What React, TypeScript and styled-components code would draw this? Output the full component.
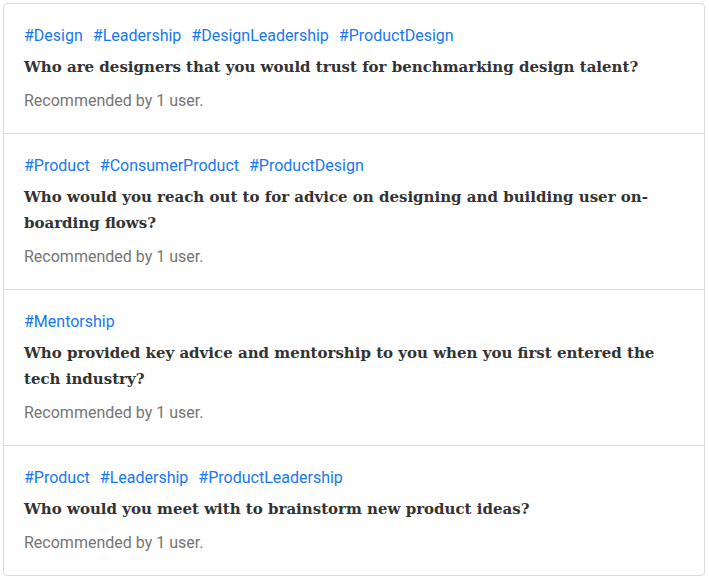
import React from 'react'
import styled, { createGlobalStyle } from 'styled-components'

const GlobalStyle = createGlobalStyle`
  body {
    margin: 0;
    background: #ffffff;
    font-family: Roboto, 'Liberation Sans', sans-serif;
  }
`

const Page = styled.div`
  padding: 3px 3px 3px 3px;
`

const Card = styled.div`
  border: 1px solid #dcdcdc;
  border-radius: 4px;
  background: #ffffff;
  width: 700px;
`

const Item = styled.div`
  padding: 22px 20px 22px 20px;
  & + & {
    border-top: 1px solid #dcdcdc;
  }
`

const Tags = styled.div`
  display: flex;
  gap: 10px;
  font-size: 16px;
  line-height: 20px;
`

const Tag = styled.a`
  color: #1877f2;
  text-decoration: none;
`

const Question = styled.div`
  margin-top: 8px;
  font-family: 'DejaVu Serif', serif;
  font-weight: bold;
  font-size: 15px;
  line-height: 26px;
  color: #333333;
`

const Meta = styled.div`
  margin-top: 11px;
  font-size: 16px;
  line-height: 20px;
  color: #757575;
`

interface Entry {
  tags: string[]
  question: string
  count: number
}

const entries: Entry[] = [
  {
    tags: ['Design', 'Leadership', 'DesignLeadership', 'ProductDesign'],
    question:
      'Who are designers that you would trust for benchmarking design talent?',
    count: 1,
  },
  {
    tags: ['Product', 'ConsumerProduct', 'ProductDesign'],
    question:
      'Who would you reach out to for advice on designing and building user on-boarding flows?',
    count: 1,
  },
  {
    tags: ['Mentorship'],
    question:
      'Who provided key advice and mentorship to you when you first entered the tech industry?',
    count: 1,
  },
  {
    tags: ['Product', 'Leadership', 'ProductLeadership'],
    question: 'Who would you meet with to brainstorm new product ideas?',
    count: 1,
  },
]

const App = () => (
  <React.Fragment>
    <GlobalStyle />
    <Page>
      <Card>
        {entries.map((entry, i) => (
          <Item key={i}>
            <Tags>
              {entry.tags.map((tag) => (
                <Tag key={tag} href="#">
                  #{tag}
                </Tag>
              ))}
            </Tags>
            <Question>{entry.question}</Question>
            <Meta>
              Recommended by {entry.count} user{entry.count === 1 ? '' : 's'}.
            </Meta>
          </Item>
        ))}
      </Card>
    </Page>
  </React.Fragment>
)

export default App
